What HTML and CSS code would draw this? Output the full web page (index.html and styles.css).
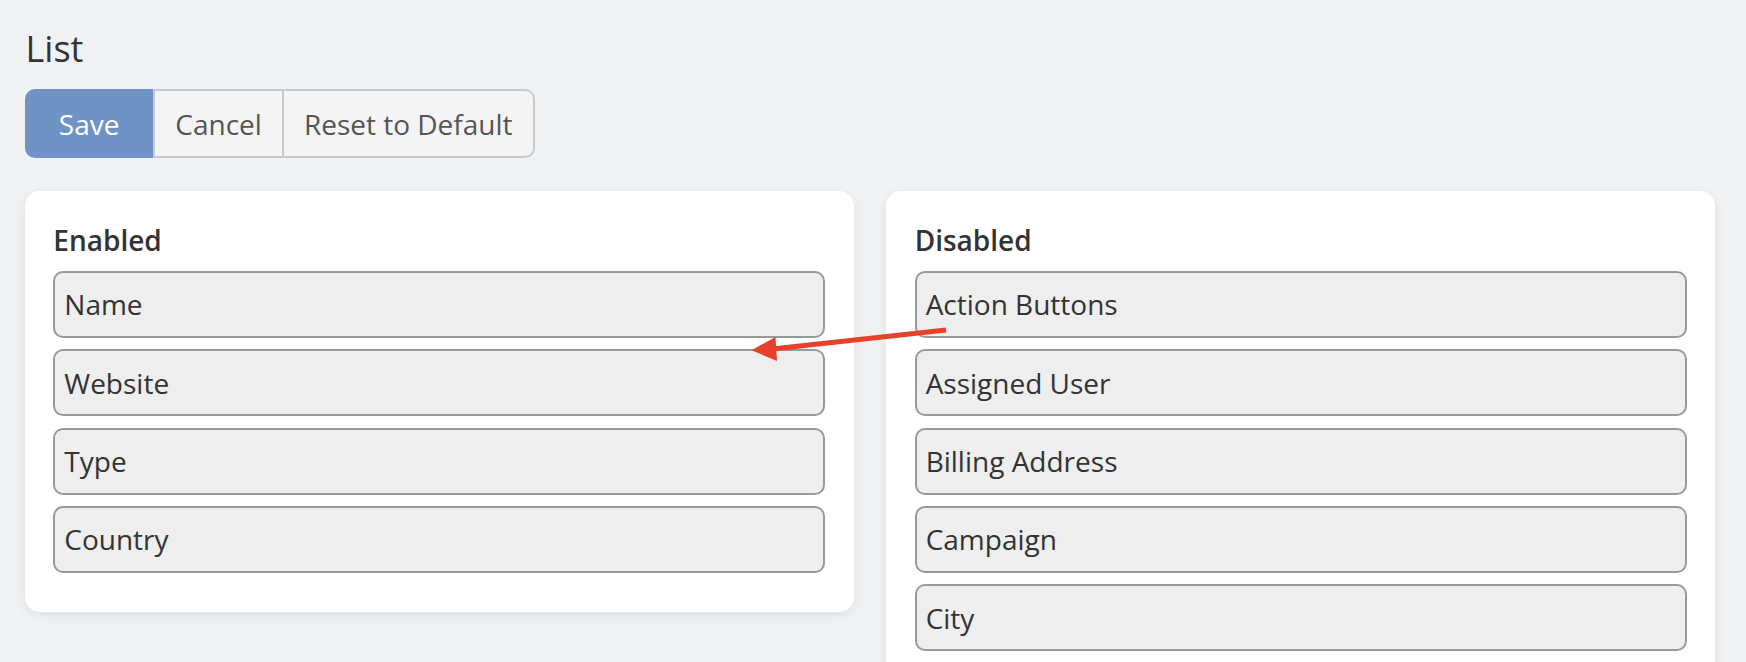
FILE: index.html
```html
<!DOCTYPE html>
<html>
<head>
<meta charset="utf-8">
<link rel="stylesheet" href="styles.css">
</head>
<body>
<div class="page">
  <h1 class="title">List</h1>
  <div class="btn-group">
    <button class="btn btn-primary">Save</button>
    <button class="btn">Cancel</button>
    <button class="btn btn-last">Reset to Default</button>
  </div>
  <div class="columns">
    <div class="card">
      <div class="card-head">Enabled</div>
      <ul class="list">
        <li class="item">Name</li>
        <li class="item">Website</li>
        <li class="item">Type</li>
        <li class="item">Country</li>
      </ul>
    </div>
    <div class="card">
      <div class="card-head">Disabled</div>
      <ul class="list">
        <li class="item">Action Buttons</li>
        <li class="item">Assigned User</li>
        <li class="item">Billing Address</li>
        <li class="item">Campaign</li>
        <li class="item">City</li>
        <li class="item" aria-hidden="true"></li>
      </ul>
    </div>
  </div>
</div>
<svg class="arrow" width="1746" height="662" viewBox="0 0 1746 662">
  <line x1="946" y1="330" x2="770" y2="349.3" stroke="#e8412a" stroke-width="5" stroke-linecap="butt"/>
  <polygon points="751.5,350.2 775.5,337 777,361" fill="#e8412a"/>
</svg>
</body>
</html>
```

FILE: styles.css
```css
html, body {
  margin: 0;
  padding: 0;
}
body {
  background: #f0f1f3;
  font-family: "Open Sans", "Noto Sans", sans-serif;
  color: #333;
  position: relative;
  width: 1746px;
  height: 662px;
  overflow: hidden;
}
.page {
  padding: 28.6px 31px 0 25px;
}
.title {
  margin: 0;
  font-size: 36px;
  font-weight: 400;
  line-height: 39.6px;
  color: #333;
  padding-left: 0.5px;
}
.btn-group {
  display: flex;
  margin-top: 20.8px;
  height: 69.3px;
}
.btn {
  font-family: inherit;
  font-size: 28px;
  color: #555;
  background: #f4f4f5;
  border: 2px solid #c8cbce;
  border-left: 0;
  margin: 0;
  padding: 0 20px;
  height: 69.3px;
  box-sizing: border-box;
  line-height: 1;
  display: flex;
  align-items: center;
  justify-content: center;
}
.btn-primary {
  background: #6f93c4;
  border-color: #6f93c4;
  color: #fff;
  min-width: 128.3px;
  border-radius: 10px 0 0 10px;
  border-left: 2px solid #6f93c4;
}
.btn-primary + .btn {
  border-left: 2px solid #c8cbce;
}
.btn-last {
  border-radius: 0 10px 10px 0;
}
.columns {
  display: grid;
  grid-template-columns: 1fr 1fr;
  column-gap: 32.7px;
  margin-top: 32.7px;
  align-items: start;
}
.card {
  background: #fff;
  border-radius: 15px;
  box-shadow: 0 3px 12px rgba(0, 0, 0, 0.07);
  padding: 28px 28.3px 28px 28.3px;
}
.card-head {
  font-size: 28px;
  font-weight: 600;
  line-height: 43.6px;
  color: #333;
  margin-bottom: 8.4px;
}
.list {
  list-style: none;
  margin: 0;
  padding: 0;
}
.item {
  height: 67px;
  box-sizing: border-box;
  border: 2px solid #999;
  border-radius: 10px;
  background: #eee;
  padding: 0 9px;
  font-size: 28px;
  color: #333;
  display: flex;
  align-items: center;
  margin-bottom: 11.33px;
}
.arrow {
  position: absolute;
  left: 0;
  top: 0;
  pointer-events: none;
}
```
